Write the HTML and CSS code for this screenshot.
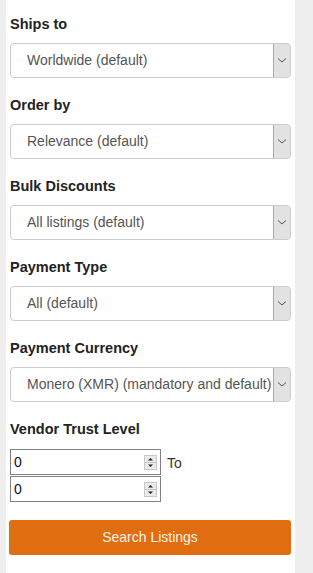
FILE: index.html
```html
<!DOCTYPE html>
<html>
<head>
<meta charset="utf-8">
<link rel="stylesheet" href="styles.css">
</head>
<body>
<div class="panel">
  <div class="group">
    <div class="label">Ships to</div>
    <div class="select"><span class="val">Worldwide (default)</span><span class="arrow"><svg width="10" height="7" viewBox="0 0 10 7"><path d="M1 1.5 L5 5 L9 1.5" fill="none" stroke="#555" stroke-width="1"/></svg></span></div>
  </div>
  <div class="group">
    <div class="label">Order by</div>
    <div class="select"><span class="val">Relevance (default)</span><span class="arrow"><svg width="10" height="7" viewBox="0 0 10 7"><path d="M1 1.5 L5 5 L9 1.5" fill="none" stroke="#555" stroke-width="1"/></svg></span></div>
  </div>
  <div class="group">
    <div class="label">Bulk Discounts</div>
    <div class="select"><span class="val">All listings (default)</span><span class="arrow"><svg width="10" height="7" viewBox="0 0 10 7"><path d="M1 1.5 L5 5 L9 1.5" fill="none" stroke="#555" stroke-width="1"/></svg></span></div>
  </div>
  <div class="group">
    <div class="label">Payment Type</div>
    <div class="select"><span class="val">All (default)</span><span class="arrow"><svg width="10" height="7" viewBox="0 0 10 7"><path d="M1 1.5 L5 5 L9 1.5" fill="none" stroke="#555" stroke-width="1"/></svg></span></div>
  </div>
  <div class="group">
    <div class="label">Payment Currency</div>
    <div class="select"><span class="val">Monero (XMR) (mandatory and default)</span><span class="arrow"><svg width="10" height="7" viewBox="0 0 10 7"><path d="M1 1.5 L5 5 L9 1.5" fill="none" stroke="#555" stroke-width="1"/></svg></span></div>
  </div>
  <div class="group trust">
    <div class="label">Vendor Trust Level</div>
    <div class="range">
      <div class="inputs">
        <div class="num"><span>0</span><span class="spin"><svg width="13" height="15" viewBox="0 0 13 15"><rect x="0.5" y="0.5" width="12" height="14" fill="#eaeaea" stroke="#c8c8c8"/><line x1="1" y1="7.5" x2="12" y2="7.5" stroke="#c8c8c8"/><path d="M4 5.5 L6.5 3 L9 5.5 Z" fill="#222"/><path d="M4 9.5 L6.5 12 L9 9.5 Z" fill="#222"/></svg></span></div>
        <div class="num"><span>0</span><span class="spin"><svg width="13" height="15" viewBox="0 0 13 15"><rect x="0.5" y="0.5" width="12" height="14" fill="#eaeaea" stroke="#c8c8c8"/><line x1="1" y1="7.5" x2="12" y2="7.5" stroke="#c8c8c8"/><path d="M4 5.5 L6.5 3 L9 5.5 Z" fill="#222"/><path d="M4 9.5 L6.5 12 L9 9.5 Z" fill="#222"/></svg></span></div>
      </div>
      <span class="to">To</span>
    </div>
  </div>
  <div class="btn">Search Listings</div>
</div>
</body>
</html>
```

FILE: styles.css
```css
html, body {
  margin: 0;
  padding: 0;
}
body {
  background: #eeeeee;
  font-family: "Liberation Sans", Arial, sans-serif;
  height: 573px;
  overflow: hidden;
}
.panel {
  margin-left: 6px;
  width: 281px;
  padding: 16px 4px 18px 4px;
  background: #ffffff;
  min-height: 539px;
}
.group {
  margin-bottom: 19px;
}
.label {
  font-size: 14.5px;
  font-weight: bold;
  line-height: 16px;
  height: 16px;
  color: #222;
  margin-bottom: 11px;
}
.select {
  height: 35px;
  box-sizing: border-box;
  border: 1px solid #cccccc;
  border-radius: 4px;
  display: flex;
  align-items: stretch;
  overflow: hidden;
}
.val {
  flex: 1;
  font-size: 14px;
  color: #555;
  line-height: 33px;
  padding-left: 16px;
  white-space: nowrap;
  overflow: hidden;
}
.arrow {
  width: 16px;
  flex: none;
  background: #e2e2e2;
  border: 1px solid #a9a9a9;
  border-radius: 0 3px 3px 0;
  margin: -1px -1px -1px 0;
  display: flex;
  align-items: center;
  justify-content: center;
}
.trust .label {
  margin-bottom: 12px;
}
.trust {
  margin-bottom: 18px;
}
.range {
  display: flex;
  align-items: flex-start;
}
.inputs {
  display: flex;
  flex-direction: column;
  gap: 1px;
}
.num {
  width: 151px;
  height: 26px;
  box-sizing: border-box;
  border: 1px solid #808080;
  display: flex;
  align-items: center;
  justify-content: space-between;
  padding: 0 2px 0 3px;
  font-size: 14px;
  color: #111;
}
.spin {
  display: flex;
  margin-right: 1px;
}
.to {
  font-size: 14px;
  color: #333;
  margin-left: 6px;
  margin-top: 6px;
}
.btn {
  margin-left: -1px;
  height: 35px;
  background: #e06e10;
  border-radius: 3px;
  color: #fff3e6;
  font-size: 14px;
  line-height: 35px;
  text-align: center;
}
```
